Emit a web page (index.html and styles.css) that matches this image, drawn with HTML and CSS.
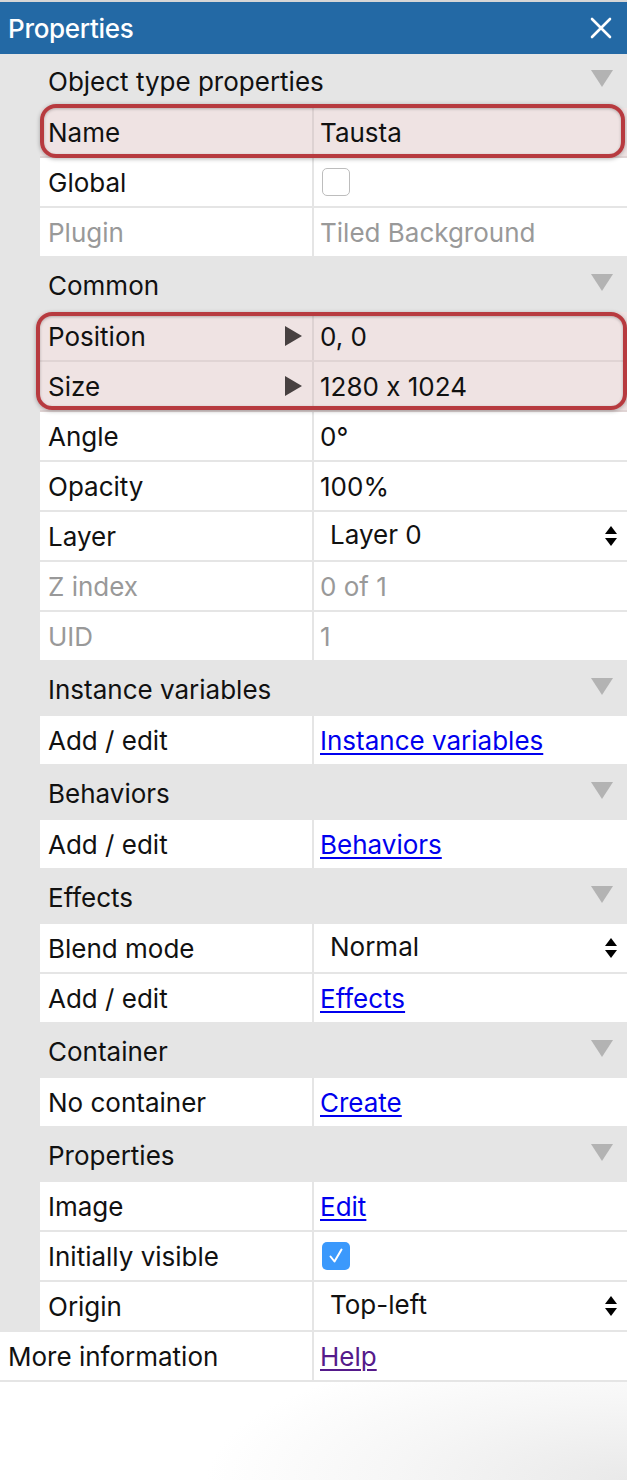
FILE: index.html
```html
<!DOCTYPE html>
<html>
<head>
<meta charset="utf-8">
<link rel="stylesheet" href="styles.css">
</head>
<body>
<div class="panel">
  <div class="titlebar">
    <span class="title">Properties</span>
    <svg class="close" width="24" height="24" viewBox="0 0 24 24"><path d="M3 3 L21 21 M21 3 L3 21" stroke="#fff" stroke-width="2.6" stroke-linecap="round"/></svg>
  </div>

  <div class="ghead"><span>Object type properties</span><span class="tri"></span></div>
  <div class="hl hl-name">
    <div class="row pink"><div class="label">Name</div><div class="value">Tausta</div></div>
  </div>
  <div class="row"><div class="label">Global</div><div class="value"><span class="cb"></span></div></div>
  <div class="row dim"><div class="label">Plugin</div><div class="value">Tiled Background</div></div>

  <div class="ghead"><span>Common</span><span class="tri"></span></div>
  <div class="hl hl-pos">
    <div class="row pink"><div class="label">Position<span class="exp"></span></div><div class="value">0, 0</div></div>
    <div class="row pink"><div class="label">Size<span class="exp"></span></div><div class="value">1280 x 1024</div></div>
  </div>
  <div class="row"><div class="label">Angle</div><div class="value">0°</div></div>
  <div class="row"><div class="label">Opacity</div><div class="value">100%</div></div>
  <div class="row"><div class="label">Layer</div><div class="value sel"><span>Layer 0</span><svg class="updown" width="14" height="22" viewBox="0 0 14 22"><path d="M7 1 L13 9 L1 9 Z M1 13 L13 13 L7 21 Z" fill="#000"/></svg></div></div>
  <div class="row dim"><div class="label">Z index</div><div class="value">0 of 1</div></div>
  <div class="row dim"><div class="label">UID</div><div class="value">1</div></div>

  <div class="ghead"><span>Instance variables</span><span class="tri"></span></div>
  <div class="row"><div class="label">Add / edit</div><div class="value"><a class="link">Instance variables</a></div></div>

  <div class="ghead"><span>Behaviors</span><span class="tri"></span></div>
  <div class="row"><div class="label">Add / edit</div><div class="value"><a class="link">Behaviors</a></div></div>

  <div class="ghead"><span>Effects</span><span class="tri"></span></div>
  <div class="row"><div class="label">Blend mode</div><div class="value sel"><span>Normal</span><svg class="updown" width="14" height="22" viewBox="0 0 14 22"><path d="M7 1 L13 9 L1 9 Z M1 13 L13 13 L7 21 Z" fill="#000"/></svg></div></div>
  <div class="row"><div class="label">Add / edit</div><div class="value"><a class="link">Effects</a></div></div>

  <div class="ghead"><span>Container</span><span class="tri"></span></div>
  <div class="row"><div class="label">No container</div><div class="value"><a class="link">Create</a></div></div>

  <div class="ghead"><span>Properties</span><span class="tri"></span></div>
  <div class="row"><div class="label">Image</div><div class="value"><a class="link">Edit</a></div></div>
  <div class="row"><div class="label">Initially visible</div><div class="value"><span class="cb checked"><svg width="28" height="28" viewBox="0 0 28 28"><path d="M8.5 14.5 L12.5 19.5 L19.5 7.5" fill="none" stroke="#fff" stroke-width="2" stroke-linecap="round" stroke-linejoin="round"/></svg></span></div></div>
  <div class="row"><div class="label">Origin</div><div class="value sel"><span>Top-left</span><svg class="updown" width="14" height="22" viewBox="0 0 14 22"><path d="M7 1 L13 9 L1 9 Z M1 13 L13 13 L7 21 Z" fill="#000"/></svg></div></div>

  <div class="row full"><div class="label">More information</div><div class="value"><a class="link visited">Help</a></div></div>
  <div class="footer"></div>
</div>
</body>
</html>
```

FILE: styles.css
```css
* { box-sizing: border-box; }
html, body { margin: 0; padding: 0; }
body {
  font-family: Inter, Roboto, "Liberation Sans", Arial, sans-serif;
  font-size: 26px;
  font-feature-settings: "calt" 0;
  color: #111;
  background: #fff;
}
.panel {
  width: 627px;
  background: #e5e5e5;
}
.titlebar {
  height: 54px;
  border-top: 2px solid #d6d6d6;
  background: #2369a5;
  display: flex;
  align-items: center;
  justify-content: space-between;
  padding: 0 14px 0 8px;
}
.title {
  color: #fff;
  font-weight: 500;
  font-size: 26px;
  letter-spacing: -0.3px;
}
.close { display: block; }
.ghead {
  height: 54px;
  display: flex;
  align-items: center;
  justify-content: space-between;
  padding: 0 14px 0 48px;
  background: #e5e5e5;
}
.tri {
  width: 0;
  height: 0;
  border-left: 11px solid transparent;
  border-right: 11px solid transparent;
  border-top: 17px solid #b3b3b3;
  margin-top: -6px;
}
.row {
  height: 50px;
  margin-left: 40px;
  display: flex;
  background: #fff;
  border-bottom: 2px solid #e5e5e5;
}
.row .label {
  width: 274px;
  flex: none;
  padding-left: 8px;
  padding-right: 10px;
  border-right: 2px solid #e5e5e5;
  display: flex;
  align-items: center;
  justify-content: space-between;
}
.row .value {
  flex: 1;
  padding-left: 6px;
  padding-right: 9px;
  display: flex;
  align-items: center;
}
.row.dim { color: #999; }
.row.pink { background: #efe3e3; border-bottom-color: #e0d4d4; }
.row.pink .label { border-right-color: #ddd2d2; }
.value.sel { padding-left: 16px; justify-content: space-between; padding-bottom: 4px; }
.updown { display: block; margin-top: 4px; }
.exp {
  width: 0;
  height: 0;
  border-top: 10px solid transparent;
  border-bottom: 10px solid transparent;
  border-left: 17px solid #474040;
}
.cb {
  width: 28px;
  height: 28px;
  border: 1.5px solid #bdbdbd;
  border-radius: 5px;
  background: #fff;
  display: block;
  margin-left: 2px;
  margin-top: -1px;
}
.cb.checked {
  background: #3b99fc;
  border: none;
}
.cb svg { display: block; }
.link {
  color: #0000ee;
  text-decoration: underline;
  text-underline-offset: 3px;
  text-decoration-thickness: 2px;
}
.link.visited { color: #551a8b; }
.row.full { margin-left: 0; }
.row.full .label { width: 314px; }
.hl { position: relative; }
.hl::after {
  content: "";
  position: absolute;
  border: 4px solid #b73a3f;
  border-radius: 16px;
  box-shadow: 0 1px 4px rgba(0,0,0,0.3), inset 0 1px 3px rgba(0,0,0,0.25);
  pointer-events: none;
}
.hl-name::after { top: -4px; bottom: 0; left: 40px; right: 2px; }
.hl-pos::after { top: 0; bottom: 2px; left: 36px; right: 0; }
.footer {
  height: 98px;
  background: radial-gradient(ellipse 420px 140px at 100% 100%, #e9e9e9 0%, #f6f6f6 55%, #fff 100%);
}
```
